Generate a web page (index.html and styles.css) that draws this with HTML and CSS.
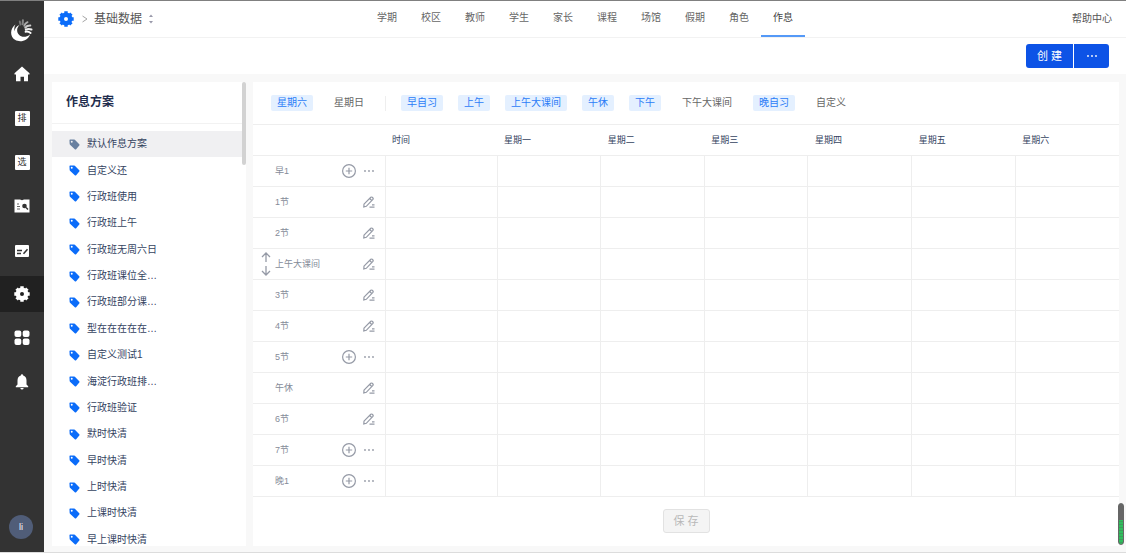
FILE: index.html
```html
<!DOCTYPE html>
<html lang="zh-CN">
<head>
    <meta charset="UTF-8">
    <meta name="viewport" content="width=device-width, initial-scale=1.0">
    <title>作息 - 基础数据</title>
    <link rel="stylesheet" href="styles.css">
</head>
<body>
    <svg class="sprite" aria-hidden="true">
        <symbol id="i-gear" viewBox="0 0 16 16">
            <circle cx="8" cy="8" r="4.200" fill="none" stroke="currentColor" stroke-width="4.400"/>
            <path d="M8 .3v3M8 12.700v3M.3 8h3M12.700 8h3M2.600 2.600l2 2M11.400 11.400l2 2M2.600 13.400l2-2M11.400 4.600l2-2" stroke="currentColor" stroke-width="3.400"/>
        </symbol>
        <symbol id="i-tag" viewBox="0 0 12 12">
            <path fill-rule="evenodd" d="M1.200.5h4.300q.5 0 .9.400l4.800 4.800q.7.800 0 1.500L7.800 11.100q-.8.700-1.500 0L1.100 6.300Q.7 5.900.7 5.300L.5 1.300Q.5.500 1.200.5zM3 1.900a1 1 0 1 0 0 2.100 1 1 0 0 0 0-2.100z"/>
        </symbol>
        <symbol id="i-edit" viewBox="0 0 12 12">
            <path d="M1 8.200 7.800 1.300q.7-.6 1.400 0l.7.700q.6.700 0 1.400L3.300 10.300.8 11zM6.700 2.500l2 2M6.500 11.200h5M9 8.800h2.500" fill="none" stroke="currentColor" stroke-width="1.200"/>
        </symbol>
        <symbol id="i-plus" viewBox="0 0 14 14">
            <path d="M7 .6a6.400 6.400 0 1 0 0 12.800A6.400 6.400 0 0 0 7 .6zM7 3.800v6.400M3.800 7h6.400" fill="none" stroke="currentColor" stroke-width="1.200"/>
        </symbol>
        <symbol id="i-more" viewBox="0 0 12 4">
            <circle cx="2" cy="2" r=".9"/><circle cx="6" cy="2" r=".9"/><circle cx="10" cy="2" r=".9"/>
        </symbol>
    </svg>

    <aside class="rail">
        <a class="rail-item" href="#" aria-label="首页">
            <svg class="logo" viewBox="0 0 24 24">
                <path fill="#fff" d="M5.500 6.500C-.2 10.500-.3 18.500 5 21.800c5.600 3.300 13 .6 15.200-5.600-3.800 3.300-8.400 3.600-11.200.6C6.300 14 6.600 9.800 9.500 7 6.500 8 4.800 10.500 4.600 13.200 4 10.800 4.300 8.500 5.500 6.500z"/>
                <g fill="none" stroke-linecap="round" stroke-width="2">
                    <path stroke="#777" d="M10.500 6.500 9.800 3.500"/>
                    <path stroke="#888" d="M12.700 6.300 12.900 2.300"/>
                    <path stroke="#aaa" d="M14.300 7.800q.7-2.500 3.200-3.600"/>
                    <path stroke="#ccc" d="M15.300 9.600q1.700-2.200 5-2.100"/>
                    <path stroke="#eee" d="M15.800 11.700q2.500-1.500 5.700-.2"/>
                    <path stroke="#fff" d="M15.600 13.700q2.700-.5 5 1.300"/>
                </g>
            </svg>
        </a>
        <a class="rail-item" href="#" aria-label="主页">
            <svg width="16" height="16" viewBox="0 0 16 16"><path fill="#fff" d="M8 .5 15.500 7.300V8.500h-1.500v6.800h-4v-4.600H6.500v4.600H2V8.500H.5V7.300z"/></svg>
        </a>
        <a class="rail-item" href="#"><span class="rail-word">排</span></a>
        <a class="rail-item" href="#"><span class="rail-word">选</span></a>
        <a class="rail-item" href="#" aria-label="课表查询">
            <svg width="16" height="16" viewBox="0 0 16 16"><path fill="#fff" d="M.5 1.500h5.500L8 2.300l2-.8h5.500v13H.5z"/><path d="M3 6h2M3 8.500h3M3 11h3" stroke="#666"/><circle cx="10.500" cy="8" r="2.300" fill="#333"/><path d="m12 9.500 2 2" stroke="#333" stroke-width="1.500"/></svg>
        </a>
        <a class="rail-item" href="#" aria-label="登记">
            <svg width="16" height="16" viewBox="0 0 16 16"><rect x="1" y="3" width="14" height="12" rx="1" fill="#fff"/><path d="M3 8.500h5M3 11.500h4M9.500 11.800l4-4.600" stroke="#333" stroke-width="1.500"/></svg>
        </a>
        <a class="rail-item active" href="#" aria-label="基础数据">
            <svg width="16" height="16"><use href="#i-gear"/></svg>
        </a>
        <a class="rail-item" href="#" aria-label="应用">
            <svg width="16" height="16" viewBox="0 0 16 16" fill="#fff"><rect x=".5" y=".5" width="6.800" height="6.500" rx="2"/><rect x="8.700" y=".5" width="6.800" height="6.500" rx="2"/><rect x=".5" y="8.500" width="6.800" height="6.500" rx="2"/><rect x="8.700" y="8.500" width="6.800" height="6.500" rx="2"/></svg>
        </a>
        <a class="rail-item" href="#" aria-label="通知">
            <svg width="16" height="16" viewBox="0 0 16 16" fill="#fff"><path d="M8 .3q1.100 0 1.200 1.300 3.300 1 3.300 5v4l1.700 1.700v.9H1.800v-.9l1.700-1.700v-4q0-4 3.300-5Q6.900.3 8 .3zM6.300 13.900h3.400Q9.400 15.500 8 15.500t-1.700-1.600z"/></svg>
        </a>
        <button class="avatar">li</button>
    </aside>

    <div class="page">
        <header class="topbar">
            <div class="crumb">
                <svg class="crumb-gear" width="16" height="16"><use href="#i-gear"/></svg>
                <svg width="6" height="8" viewBox="0 0 6 8" fill="none" stroke="#a6a6a6"><path d="m.5 1 4.500 3-4.500 3"/></svg>
                <span>基础数据</span>
                <svg width="6" height="10" viewBox="0 0 6 10" fill="#99a"><path d="m3 .5 2 2.500H1zM3 9.500 1 7h4z"/></svg>
            </div>
            <nav class="tabs">
                <a href="#">学期</a>
                <a href="#">校区</a>
                <a href="#">教师</a>
                <a href="#">学生</a>
                <a href="#">家长</a>
                <a href="#">课程</a>
                <a href="#">场馆</a>
                <a href="#">假期</a>
                <a href="#">角色</a>
                <a href="#" class="active">作息</a>
            </nav>
            <a class="help" href="#">帮助中心</a>
        </header>

        <div class="toolbar">
            <button class="btn-create">创 建</button>
            <button class="btn-more" aria-label="更多"><svg width="12" height="4" fill="currentColor"><use href="#i-more"/></svg></button>
        </div>

        <main class="content">
            <section class="plans">
                <h2>作息方案</h2>
                <ul id="planList"></ul>
                <div class="plans-thumb"></div>
            </section>

            <section class="schedule">
                <div class="filters">
                    <button class="chip on">星期六</button>
                    <button class="chip">星期日</button>
                    <i class="divider"></i>
                    <button class="chip on">早自习</button>
                    <button class="chip on">上午</button>
                    <button class="chip on">上午大课间</button>
                    <button class="chip on">午休</button>
                    <button class="chip on">下午</button>
                    <button class="chip">下午大课间</button>
                    <button class="chip on">晚自习</button>
                    <button class="chip">自定义</button>
                </div>
                <table>
                    <colgroup><col class="col-name"><col class="col-time"><col span="6"></colgroup>
                    <thead>
                        <tr><th></th><th>时间</th><th>星期一</th><th>星期二</th><th>星期三</th><th>星期四</th><th>星期五</th><th>星期六</th></tr>
                    </thead>
                    <tbody id="rows"></tbody>
                </table>
                <div class="footer">
                    <button class="btn-save" disabled>保 存</button>
                </div>
            </section>
        </main>
        <div class="meter"></div>
    </div>

    <script src="script.js"></script>
</body>
</html>
```
FILE: styles.css
```css
* {
    box-sizing: border-box;
}

body {
    margin: 0;
    height: 100vh;
    display: flex;
    overflow: hidden;
    border-top: 1px solid #808080;
    border-bottom: 1px solid #dcdcdc;
    background: #f8f8f8;
    color: #666;
    font-family: "Liberation Sans", "Noto Sans CJK SC", sans-serif;
    font-size: 10px;
    line-height: 16px;
}

a {
    color: inherit;
    text-decoration: none;
}

button {
    font: inherit;
    color: inherit;
    padding: 0;
    border: none;
    background: none;
    cursor: pointer;
}

svg {
    display: block;
    flex: none;
}

.sprite {
    position: absolute;
    width: 0;
    height: 0;
}

/* left rail */
.rail {
    flex: none;
    width: 44px;
    padding: 11px 0 13px;
    display: flex;
    flex-direction: column;
    gap: 8px;
    background: #333;
    color: #fff;
}

.rail-item {
    height: 36px;
    display: flex;
    align-items: center;
    justify-content: center;
}

.rail-item.active {
    background: #212121;
}

.logo {
    width: 24px;
    height: 24px;
}

.rail-word {
    width: 15px;
    height: 15px;
    border-radius: 1px;
    background: #fff;
    color: #333;
    font-size: 9px;
    line-height: 15px;
    text-align: center;
}

.avatar {
    width: 24px;
    height: 24px;
    margin: auto auto 0 9px;
    border-radius: 50%;
    background: #505d78;
    font-size: 9px;
}

/* header */
.page {
    flex: 1;
    min-width: 0;
    display: flex;
    flex-direction: column;
    position: relative;
}

.topbar {
    flex: none;
    height: 37px;
    padding: 0 14px;
    display: grid;
    grid-template-columns: 1fr auto 1fr;
    background: #fff;
    border-bottom: 1px solid #f2f2f2;
}

.crumb {
    display: flex;
    align-items: center;
    gap: 6px;
    color: #555;
    font-size: 12px;
}

.crumb-gear {
    margin-right: 2px;
    color: #0b6cf9;
}

.tabs {
    display: flex;
}

.tabs a {
    padding: 0 12px;
    line-height: 34px;
    border-bottom: 2px solid transparent;
}

.tabs .active {
    border-color: #5499f7;
    color: #444;
}

.help {
    align-self: center;
    justify-self: end;
    color: #555;
}

.toolbar {
    flex: none;
    height: 36px;
    padding: 0 17px;
    display: flex;
    align-items: center;
    justify-content: flex-end;
    gap: 1px;
    background: #fff;
}

.btn-create,
.btn-more {
    height: 24px;
    background: #0d53e6;
    color: #fff;
}

.btn-create {
    width: 47px;
    border-radius: 3px 0 0 3px;
    font-size: 11px;
}

.btn-more {
    width: 35px;
    display: flex;
    align-items: center;
    justify-content: center;
    border-radius: 0 3px 3px 0;
}

.content {
    flex: 1;
    min-height: 0;
    padding: 8px 7px 6px 8px;
    display: flex;
    gap: 7px;
}

/* plan list */
.plans {
    flex: none;
    width: 194px;
    position: relative;
    overflow: hidden;
    background: #fff;
}

.plans h2 {
    margin: 0;
    padding: 0 14px;
    border-bottom: 1px solid #f2f2f2;
    color: #1f2d4d;
    font-size: 12px;
    line-height: 41px;
}

.plans ul {
    min-height: 422px;
    margin: 7px 0 0;
    padding: 0;
    display: grid;
    grid-auto-rows: 1fr;
    list-style: none;
}

.plans li {
    padding: 0 17px;
    display: flex;
    align-items: center;
    gap: 7px;
    color: #34435f;
}

.plans li svg {
    fill: #0b6cf9;
}

.plans li.active {
    background: #f0f0f2;
}

.plans li.active svg {
    fill: #6880a0;
}

.plans-thumb {
    position: absolute;
    top: 0;
    right: 0;
    width: 4px;
    height: 83px;
    border-radius: 2px;
    background: #d2d2d2;
}

/* schedule */
.schedule {
    flex: 1;
    min-width: 0;
    background: #fff;
}

.filters {
    height: 42px;
    padding: 0 18px;
    display: flex;
    align-items: center;
    gap: 15px;
}

.chip {
    padding: 0 6px;
    border-radius: 2px;
}

.chip.on {
    background: #e4f0ff;
    color: #2b7cf7;
}

.divider {
    width: 1px;
    height: 15px;
    background: #eee;
}

table {
    width: 100%;
    table-layout: fixed;
    border-collapse: collapse;
    font-size: 9px;
}

.col-name {
    width: 132px;
}

.col-time {
    width: 112px;
}

th,
td {
    height: 31px;
    padding: 0 7px;
    border-top: 1px solid #eee;
    text-align: left;
}

th {
    color: #34435f;
    font-weight: normal;
}

td {
    border-bottom: 1px solid #eee;
}

td + td {
    border-left: 1px solid #eee;
}

td:first-child {
    padding: 0 10px 0 8px;
    color: #858b99;
}

.cell {
    display: flex;
    align-items: center;
    gap: 7px;
}

.cell .name {
    flex: 1;
}

.move {
    width: 10px;
    margin-right: -3px;
    display: flex;
    justify-content: center;
}

.cell button {
    color: #959aa6;
}

.footer {
    padding: 12px 0;
    text-align: center;
}

.btn-save {
    width: 47px;
    height: 24px;
    border: 1px solid #e2e2e2;
    border-radius: 3px;
    background: #f4f4f4;
    color: #b8b8b8;
    font-size: 11px;
    cursor: not-allowed;
}

/* level bar floating in the corner */
.meter {
    position: absolute;
    right: 2px;
    bottom: 7px;
    width: 6px;
    height: 42px;
    border: 1px solid #666;
    border-radius: 3px;
    background: linear-gradient(#666 16px, transparent 16px), repeating-linear-gradient(#2fbd5c 0 2px, #3c9c5b 2px 3px);
}
```
FILE: script.js
```js
const plans = [
    '默认作息方案', '自定义还', '行政班使用', '行政班上午', '行政班无周六日',
    '行政班课位全…', '行政班部分课…', '型在在在在在…', '自定义测试1', '海淀行政班排…',
    '行政班验证', '默时快清', '早时快清', '上时快清', '上课时快清', '早上课时快清'
];

const periods = [
    { name: '早1', extra: true },
    { name: '1节' },
    { name: '2节' },
    { name: '上午大课间', move: true },
    { name: '3节' },
    { name: '4节' },
    { name: '5节', extra: true },
    { name: '午休' },
    { name: '6节' },
    { name: '7节', extra: true },
    { name: '晚1', extra: true }
];

const arrows = `<svg width="10" height="24" viewBox="0 0 10 24" fill="none" stroke="currentColor" stroke-width="1.300">
    <path d="M5 10V1M1 5l4-4 4 4M5 14v9M1 19l4 4 4-4"/></svg>`;

function icon(id, width, height) {
    return `<svg width="${width}" height="${height}" fill="currentColor"><use href="#i-${id}"/></svg>`;
}

document.getElementById('planList').innerHTML = plans.map((name, i) =>
    `<li class="${i === 0 ? 'active' : ''}">${icon('tag', 11, 11)}<a href="#">${name}</a></li>`
).join('');

document.getElementById('rows').innerHTML = periods.map(p => {
    const move = p.move ? `<button class="move" aria-label="移动">${arrows}</button>` : '<span class="move"></span>';
    const actions = p.extra
        ? `<button aria-label="添加">${icon('plus', 14, 14)}</button><button aria-label="更多">${icon('more', 12, 4)}</button>`
        : `<button aria-label="编辑">${icon('edit', 12, 12)}</button>`;
    return `<tr><td><div class="cell">
        ${move}
        <span class="name">${p.name}</span>${actions}
    </div></td>${'<td></td>'.repeat(7)}</tr>`;
}).join('');
```
